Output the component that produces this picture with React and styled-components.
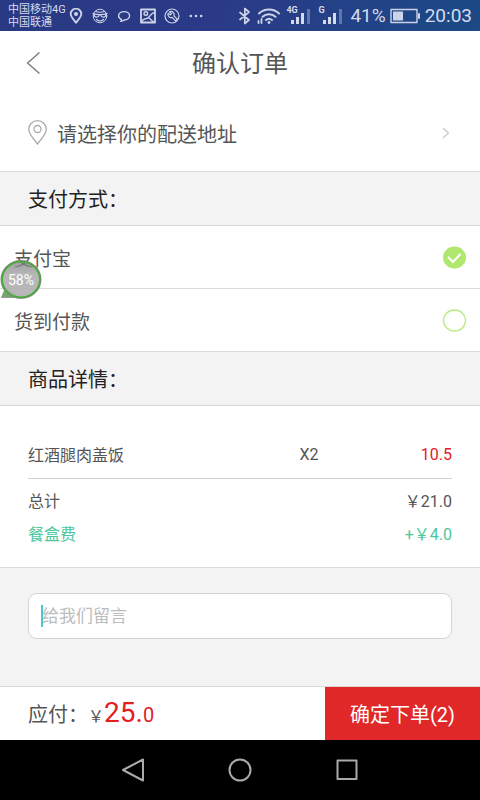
import { useState } from "react";
import styled, { createGlobalStyle } from "styled-components";

const GlobalStyle = createGlobalStyle`
  *, *::before, *::after {
    box-sizing: border-box;
  }

  body {
    margin: 0;
    background: #fff;
    color: #555;
    font-family: Roboto, "Noto Sans CJK SC", sans-serif;
  }

  button, input {
    font-family: inherit;
  }
`;

const Page = styled.div`
  position: relative;
  min-height: 100vh;
  display: flex;
  flex-direction: column;
`;

const StatusBar = styled.div`
  height: 31px;
  padding: 0 8px;
  display: flex;
  justify-content: space-between;
  align-items: center;
  background: linear-gradient(100deg, #2a3983 0%, #2b3a87 45%, #1b4a86 100%);
  color: #d5dbec;
`;

const StatusGroup = styled.div`
  display: flex;
  align-items: center;
  gap: ${({ $gap }) => $gap}px;

  svg {
    display: block;
    flex: none;
  }
`;

const Carrier = styled.div`
  font-size: 11px;
  line-height: 13px;
  white-space: nowrap;
`;

const StatusText = styled.span`
  font-size: 19px;
  line-height: 31px;
`;

const Signal = styled.span`
  position: relative;
  width: 28px;
  height: 18px;
`;

const SignalLabel = styled.span`
  position: absolute;
  top: -2px;
  left: 0;
  font-size: 9px;
  line-height: 10px;
  font-weight: 700;
`;

const Header = styled.header`
  height: 64px;
  padding: 0 24px;
  display: grid;
  grid-template-columns: 24px 1fr 24px;
  align-items: center;
`;

const IconButton = styled.button`
  padding: 0;
  border: 0;
  background: none;
  display: flex;
  justify-content: center;
  align-items: center;
  cursor: pointer;
`;

const Title = styled.h1`
  margin: 0;
  padding-top: 2px;
  font-size: 24px;
  line-height: 32px;
  font-weight: 400;
  text-align: center;
`;

const AddressLink = styled.a`
  height: 77px;
  padding: 0 28px;
  display: flex;
  align-items: center;
  gap: 10px;
  border-bottom: 1px solid #dcdcdc;
  color: inherit;
  font-size: 20px;
  text-decoration: none;

  span {
    flex: 1;
  }
`;

const SectionTitle = styled.h2`
  height: 54px;
  margin: 0;
  padding: 2px 28px 0;
  background: #f3f3f3;
  border-bottom: 1px solid #d8d8d8;
  color: #222;
  font-size: 20px;
  line-height: 52px;
  font-weight: 400;
`;

const PayOption = styled.label`
  height: 63px;
  padding: 0 14px;
  display: flex;
  justify-content: space-between;
  align-items: center;
  border-bottom: 1px solid #dcdcdc;
  font-size: 19px;
  cursor: pointer;
`;

const RadioWrap = styled.span`
  position: relative;
  width: 24px;
  height: 24px;

  svg {
    display: block;
  }
`;

const Radio = styled.input`
  position: absolute;
  inset: 0;
  width: 100%;
  height: 100%;
  margin: 0;
  opacity: 0;
  cursor: pointer;
`;

const Details = styled.section`
  padding: 24px 28px 16px;
  border-bottom: 1px solid #dcdcdc;
  font-size: 16px;
`;

const Items = styled.table`
  width: 100%;
  border-collapse: separate;
  border-spacing: 0;
  table-layout: fixed;
`;

const ItemCell = styled.td`
  width: ${({ $width }) => $width || "auto"};
  height: 49px;
  padding: 0;
  border-bottom: 1px solid #d0d0d0;
  text-align: ${({ $align }) => $align || "left"};
  color: ${({ $color }) => $color || "inherit"};
`;

const Totals = styled.dl`
  margin: 0;
  padding-top: 6px;
`;

const TotalRow = styled.div`
  display: flex;
  justify-content: space-between;
  line-height: 33px;
  color: ${({ $color }) => $color || "inherit"};

  dd {
    margin: 0;
  }
`;

const MessageArea = styled.section`
  flex: 1;
  padding: 25px 28px;
  background: #f3f3f3;
`;

const MessageField = styled.div`
  position: relative;
`;

const MessageInput = styled.input`
  display: block;
  width: 100%;
  height: 46px;
  padding: 0 13px;
  border: 1px solid #d4d4d4;
  border-radius: 9px;
  outline: none;
  background: #fff;
  color: #555;
  caret-color: #3cc8c8;
  font-size: 17px;

  &::placeholder {
    color: #bdbdbd;
    opacity: 1;
  }
`;

const Caret = styled.span`
  position: absolute;
  top: 12px;
  left: 13px;
  width: 2px;
  height: 22px;
  background: #4cc8cc;
  pointer-events: none;
`;

const Footer = styled.footer`
  height: 54px;
  display: flex;
  border-top: 1px solid #d8d8d8;
`;

const Payable = styled.div`
  flex: 1;
  padding-left: 28px;
  display: flex;
  align-items: baseline;
  font-size: 20px;
  line-height: 52px;
`;

const Price = styled.span`
  color: #e3201f;
`;

const Yen = styled.span`
  font-size: 16px;
`;

const PriceMajor = styled.span`
  font-size: 28px;
`;

const SubmitButton = styled.button`
  padding: 0 25px;
  border: 0;
  background: #e02828;
  color: #fff;
  font-size: 20px;
  cursor: pointer;
`;

const NavBar = styled.nav`
  height: 60px;
  padding: 0 80px;
  display: flex;
  background: #000;

  button {
    flex: 1;
  }
`;

const Bubble = styled.div`
  position: absolute;
  top: 260px;
  left: 0;
  width: 42px;
  height: 40px;

  svg {
    display: block;
  }
`;

const BubbleText = styled.span`
  position: absolute;
  inset: 0;
  color: #fff;
  font-size: 14px;
  line-height: 40px;
  text-align: center;
`;

const StatusIcon = ({ children, width = 16, height = 16 }) => (
  <svg
    width={width}
    height={height}
    viewBox={`0 0 ${width} ${height}`}
    fill="none"
    stroke="#cdd4e8"
    strokeWidth="1.4"
    strokeLinecap="round"
    strokeLinejoin="round"
    aria-hidden="true"
  >
    {children}
  </svg>
);

const SignalIcon = ({ label }) => (
  <Signal>
    <SignalLabel>{label}</SignalLabel>
    <svg width="28" height="18" viewBox="0 0 28 18" fill="#d5dbec" aria-hidden="true">
      <rect x="5" y="13" width="3" height="4" />
      <rect x="10" y="10" width="3" height="7" />
      <rect x="15" y="6" width="3" height="11" />
      <rect x="21" y="2" width="3" height="15" opacity="0.35" />
    </svg>
  </Signal>
);

const Status = () => (
  <StatusBar>
    <StatusGroup $gap={2}>
      <Carrier>
        中国移动4G
        <br />
        中国联通
      </Carrier>
      <StatusGroup $gap={8}>
        <StatusIcon>
          <path d="M8 14.8C5 11 2.700 8.500 2.700 6a5.300 5.300 0 0 1 10.600 0c0 2.500-2.300 5-5.300 8.800z" strokeWidth="1.800" />
          <circle cx="8" cy="6" r="1.300" fill="#cdd4e8" />
        </StatusIcon>
        <StatusIcon>
          <circle cx="8" cy="8" r="6.800" strokeWidth="1" />
          <path d="M.8 5.500c4 1.300 10.400 1.300 14.400 0M2 6.500c.3 3.500 4.500 3.500 5.400.4h1.200c.9 3.100 5.100 3.100 5.400-.4M4.500 11.500c2 1.800 5 1.800 7 0M3.500 3.500c3 1 6 1 9 0" strokeWidth="1.200" />
        </StatusIcon>
        <StatusIcon>
          <path d="M5.500 11.400C3.600 10.700 2.600 9.500 2.600 7.800c0-2.300 2.400-4.200 5.500-4.200s5.500 1.900 5.500 4.200-2.400 4.100-5.300 4.200c-1 .9-2 1.300-3.700 1.400.6-.6.9-1.200.9-2z" />
        </StatusIcon>
        <StatusIcon>
          <rect x="1" y="1.500" width="14" height="13" strokeWidth="1.800" />
          <circle cx="5.800" cy="5.500" r="1.800" />
          <path d="M1.500 13.500C4 10 7 11 8.500 9.500S11 5 14.500 4.500M9 10l4.500 4" />
        </StatusIcon>
        <StatusIcon>
          <circle cx="8" cy="8" r="7" strokeWidth="1.200" />
          <path d="M5.500 3.800a3.200 3.200 0 0 1 4.500 4l3.300 3.300-1.800 1.800-3.300-3.500a3.200 3.200 0 0 1-4-4.300l2 1.800 1.400-1.200z" strokeWidth="1.200" />
        </StatusIcon>
        <StatusIcon>
          <path d="M2.800 8h.01M8 8h.01M13.200 8h.01" strokeWidth="2.600" />
        </StatusIcon>
      </StatusGroup>
    </StatusGroup>
    <StatusGroup $gap={4}>
      <StatusIcon width={14} height={18}>
        <path d="M2 5.500l9 7.500-4.200 3.500v-15L11 5l-9 7.500" strokeWidth="1.700" />
      </StatusIcon>
      <StatusIcon width={26} height={18}>
        <path d="M3 6.500c5.500-5.300 14.500-5.300 20 0M6.500 9.800c3.700-3.400 9.300-3.400 13 0M10 13c1.900-1.600 4.100-1.600 6 0" strokeWidth="2" />
        <circle cx="13" cy="15.500" r="1.400" fill="#cdd4e8" stroke="none" />
        <path d="M2.500 16v-2M5.500 12v4" strokeWidth="1.800" />
      </StatusIcon>
      <SignalIcon label="4G" />
      <SignalIcon label="G" />
      <StatusText>41%</StatusText>
      <StatusIcon width={31} height={16}>
        <rect x="1" y="1.500" width="26" height="13" strokeWidth="1.400" />
        <rect x="3" y="3.500" width="10" height="9" fill="#cdd4e8" stroke="none" />
        <path d="M29 6v4" strokeWidth="2" />
      </StatusIcon>
      <StatusText>20:03</StatusText>
    </StatusGroup>
  </StatusBar>
);

const RadioIcon = ({ checked }) => (
  <svg width="24" height="24" viewBox="0 0 24 24" fill="none" aria-hidden="true">
    {checked ? (
      <>
        <ellipse cx="12.500" cy="12.500" rx="11.500" ry="11" fill="#b0e86f" />
        <path d="M6 12l5 5 7.500-8" stroke="#fff" strokeWidth="2" />
      </>
    ) : (
      <ellipse cx="12.500" cy="12.500" rx="11" ry="10.500" stroke="#b9ea85" strokeWidth="1.300" />
    )}
  </svg>
);

const payments = [
  { id: "alipay", label: "支付宝" },
  { id: "cod", label: "货到付款" },
];

const items = [{ name: "红酒腿肉盖饭", qty: 2, price: "10.5" }];

const App = () => {
  const [payment, setPayment] = useState("alipay");
  const [message, setMessage] = useState("");
  const [focused, setFocused] = useState(false);

  return (
    <>
      <GlobalStyle />
      <Page>
        <Status />
        <Header>
          <IconButton type="button" aria-label="返回">
            <svg width="24" height="24" viewBox="0 0 24 24" fill="none" stroke="#777" strokeWidth="1.300">
              <path d="M15.500 1.500L3.500 12l12 10.500" />
            </svg>
          </IconButton>
          <Title>确认订单</Title>
        </Header>

        <AddressLink href="#address">
          <svg width="19" height="26" viewBox="0 0 19 26" fill="none" stroke="#aaa" strokeWidth="1.300">
            <path d="M9.500 24C5.500 18.500.7 14.300.7 9.300a8.800 8.600 0 0 1 17.600 0c0 5-4.800 9.200-8.800 14.700z" />
            <circle cx="9.500" cy="9" r="3.500" />
          </svg>
          <span>请选择你的配送地址</span>
          <svg width="10" height="12" viewBox="0 0 10 12" fill="none" stroke="#c8c8c8" strokeWidth="1.200">
            <path d="M1 1l5.500 5L1 11" />
          </svg>
        </AddressLink>

        <SectionTitle>支付方式：</SectionTitle>
        {payments.map(({ id, label }) => (
          <PayOption key={id}>
            {label}
            <RadioWrap>
              <RadioIcon checked={payment === id} />
              <Radio
                type="radio"
                name="payment"
                value={id}
                checked={payment === id}
                onChange={() => setPayment(id)}
              />
            </RadioWrap>
          </PayOption>
        ))}

        <SectionTitle>商品详情：</SectionTitle>
        <Details>
          <Items>
            <tbody>
              {items.map(({ name, qty, price }) => (
                <tr key={name}>
                  <ItemCell>{name}</ItemCell>
                  <ItemCell $width="18%">X{qty}</ItemCell>
                  <ItemCell $width="18%" $align="right" $color="#e3201f">
                    {price}
                  </ItemCell>
                </tr>
              ))}
            </tbody>
          </Items>
          <Totals>
            <TotalRow>
              <dt>总计</dt>
              <dd>￥21.0</dd>
            </TotalRow>
            <TotalRow $color="#4cc79c">
              <dt>餐盒费</dt>
              <dd>+￥4.0</dd>
            </TotalRow>
          </Totals>
        </Details>

        <MessageArea>
          <MessageField>
            <MessageInput
              type="text"
              aria-label="给我们留言"
              placeholder="给我们留言"
              value={message}
              onChange={(e) => setMessage(e.target.value)}
              onFocus={() => setFocused(true)}
              onBlur={() => setFocused(false)}
            />
            {!focused && !message && <Caret />}
          </MessageField>
        </MessageArea>

        <Footer>
          <Payable>
            <span>应付：</span>
            <Yen>￥</Yen>
            <Price>
              <PriceMajor>25.</PriceMajor>0
            </Price>
          </Payable>
          <SubmitButton type="button">确定下单(2)</SubmitButton>
        </Footer>

        <NavBar>
          <IconButton type="button" aria-label="后退">
            <svg width="24" height="24" viewBox="0 0 24 24" fill="none" stroke="#aaa" strokeWidth="2" strokeLinejoin="round">
              <path d="M22 1.500v21L2 12z" />
            </svg>
          </IconButton>
          <IconButton type="button" aria-label="主页">
            <svg width="24" height="24" viewBox="0 0 24 24" fill="none" stroke="#aaa" strokeWidth="2">
              <circle cx="12" cy="12" r="10.500" />
            </svg>
          </IconButton>
          <IconButton type="button" aria-label="最近任务">
            <svg width="24" height="24" viewBox="0 0 24 24" fill="none" stroke="#aaa" strokeWidth="2" strokeLinejoin="round">
              <rect x="2.500" y="2.500" width="19" height="18.500" />
            </svg>
          </IconButton>
        </NavBar>

        <Bubble>
          <svg width="42" height="40" viewBox="0 0 42 40" aria-hidden="true">
            <defs>
              <linearGradient id="gloss" x1="0" y1="0" x2="0" y2="1">
                <stop offset="0" stopColor="#777" stopOpacity="0.7" />
                <stop offset="0.35" stopColor="#aaa" stopOpacity="0.85" />
                <stop offset="1" stopColor="#b4b4b4" stopOpacity="0.95" />
              </linearGradient>
            </defs>
            <path d="M5 29L1.500 37.500h19z" fill="#72a968" stroke="#999" strokeWidth="1" />
            <ellipse cx="21" cy="19.500" rx="19.500" ry="18.500" fill="url(#gloss)" stroke="#888" strokeWidth="2" />
            <ellipse cx="21" cy="19.500" rx="18.800" ry="17.800" fill="none" stroke="#44ae35" strokeWidth="1.600" />
          </svg>
          <BubbleText>58%</BubbleText>
        </Bubble>
      </Page>
    </>
  );
};

export default App;
